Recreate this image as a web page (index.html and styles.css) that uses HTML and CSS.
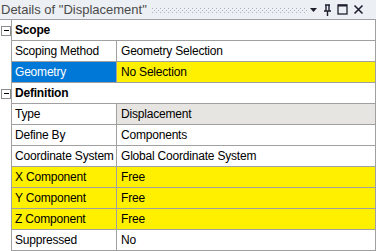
FILE: index.html
```html
<!DOCTYPE HTML>
<html>

<head>
  <meta charset="utf-8">
  <link rel="stylesheet" href="styles.css">
</head>

<body>
  <div class="titlebar">
    <span class="title">Details of "Displacement"</span>
    <svg class="grip" width="155" height="5">
      <defs>
        <pattern id="dots" width="4" height="4" patternUnits="userSpaceOnUse">
          <rect width="1" height="1" fill="#a9b1bd"/>
          <rect x="2" y="2" width="1" height="1" fill="#a9b1bd"/>
        </pattern>
      </defs>
      <rect width="155" height="5" fill="url(#dots)"/>
    </svg>
    <div class="tools">
      <svg width="9" height="6" viewBox="0 0 9 6"><path d="M1 1h7l-3.5 4z" fill="#1e1e2e"/></svg>
      <svg width="9" height="12" viewBox="0 0 9 12"><path d="M2 1h5M3 1v6M6 1v6M1 7h7M4.5 7v5" stroke="#1e1e2e" stroke-width="1.4" fill="none"/></svg>
      <svg width="11" height="11" viewBox="0 0 11 11"><rect x="1" y="1" width="9" height="9" stroke="#1e1e2e" stroke-width="1.3" fill="none"/><path d="M1 1.5h9" stroke="#1e1e2e" stroke-width="2"/></svg>
      <svg width="11" height="11" viewBox="0 0 11 11"><path d="M1.5 1.5l8 8M9.5 1.5l-8 8" stroke="#1e1e2e" stroke-width="1.6"/></svg>
    </div>
  </div>

  <div class="sheet">
    <div class="row">
      <div class="gutter"><span class="toggle"></span></div>
      <div class="cells"><div class="head">Scope</div></div>
    </div>
    <div class="row">
      <div class="gutter"></div>
      <div class="cells"><div class="name">Scoping Method</div><div class="value">Geometry Selection</div></div>
    </div>
    <div class="row">
      <div class="gutter"></div>
      <div class="cells"><div class="name selected">Geometry</div><div class="value warn">No Selection</div></div>
    </div>
    <div class="row">
      <div class="gutter"><span class="toggle"></span></div>
      <div class="cells"><div class="head">Definition</div></div>
    </div>
    <div class="row">
      <div class="gutter"></div>
      <div class="cells"><div class="name">Type</div><div class="value readonly">Displacement</div></div>
    </div>
    <div class="row">
      <div class="gutter"></div>
      <div class="cells"><div class="name">Define By</div><div class="value">Components</div></div>
    </div>
    <div class="row">
      <div class="gutter"></div>
      <div class="cells"><div class="name">Coordinate System</div><div class="value">Global Coordinate System</div></div>
    </div>
    <div class="row">
      <div class="gutter"></div>
      <div class="cells"><div class="name warn">X Component</div><div class="value warn">Free</div></div>
    </div>
    <div class="row">
      <div class="gutter"></div>
      <div class="cells"><div class="name warn">Y Component</div><div class="value warn">Free</div></div>
    </div>
    <div class="row">
      <div class="gutter"></div>
      <div class="cells"><div class="name warn">Z Component</div><div class="value warn">Free</div></div>
    </div>
    <div class="row">
      <div class="gutter"></div>
      <div class="cells"><div class="name">Suppressed</div><div class="value">No</div></div>
    </div>
  </div>
</body>

</html>
```

FILE: styles.css
```css
body {
    margin: 0;
    font-family: "Liberation Sans", Arial, sans-serif;
    font-size: 12px;
    letter-spacing: -0.2px;
    color: #000;
    background: #fff;
}

.titlebar {
    height: 20px;
    background: #eceff3;
    display: flex;
    align-items: center;
    border-bottom: 1px solid #a0a0a0;
    box-sizing: border-box;
}
.title {
    font-size: 13px;
    letter-spacing: 0;
    color: #4a4a4a;
    padding-left: 1px;
    white-space: nowrap;
}
.grip {
    margin-left: 5px;
    margin-top: 1px;
}
.tools {
    display: flex;
    align-items: center;
    gap: 5px;
    margin-left: 2px;
}

.row {
    display: flex;
    height: 21px;
}
.gutter {
    width: 11px;
    display: flex;
    align-items: center;
}
.toggle {
    width: 8px;
    height: 8px;
    margin-left: 1px;
    border: 1px solid #8c8c8c;
    background: linear-gradient(#000, #000) center / 5px 1px no-repeat;
}
.cells {
    width: 363px;
    display: flex;
    border-left: 1px solid #a0a0a0;
    border-right: 1px solid #a0a0a0;
    border-bottom: 1px solid #a0a0a0;
}
.head {
    flex: 1;
    font-weight: bold;
    padding-left: 3px;
    line-height: 20px;
}
.name {
    width: 101px;
    padding-left: 3px;
    border-right: 1px solid #a0a0a0;
    line-height: 20px;
    white-space: nowrap;
}
.value {
    flex: 1;
    padding-left: 4px;
    line-height: 20px;
    white-space: nowrap;
}
.selected {
    background: #0078d7;
    color: #fff;
}
.warn {
    background: #fff000;
}
.readonly {
    background: #e7e5e2;
}
```
